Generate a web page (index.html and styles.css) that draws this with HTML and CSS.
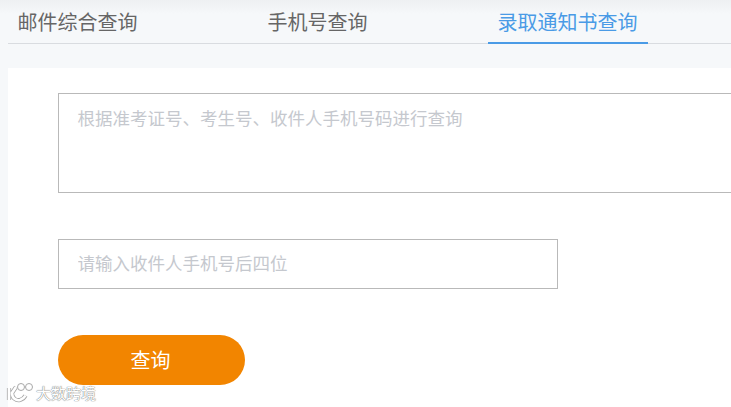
FILE: index.html
```html
<!DOCTYPE html>
<html lang="zh-CN">
<head>
    <meta charset="UTF-8">
    <meta name="viewport" content="width=device-width, initial-scale=1.0">
    <title>录取通知书查询</title>
    <link rel="stylesheet" href="styles.css">
</head>
<body>
    <div class="tabs">
        <a class="tab">邮件综合查询</a>
        <a class="tab">手机号查询</a>
        <a class="tab active">录取通知书查询</a>
    </div>
    <div class="panel">
        <textarea class="field field-area" placeholder="根据准考证号、考生号、收件人手机号码进行查询"></textarea>
        <input class="field field-phone" type="text" placeholder="请输入收件人手机号后四位">
        <button class="btn" type="button">查询</button>
    </div>
    <div class="watermark">
        <svg class="watermark-logo" width="28" height="22" viewBox="0 0 28 22" fill="none">
            <path d="M3 6v12M10 5 6 11c0 5 4 8 8 7 3-1 4.500-2.500 5.500-4.500" stroke="#a8a8a8" stroke-width="4.200"/>
            <path d="M3 6v12M10 5 6 11c0 5 4 8 8 7 3-1 4.500-2.500 5.500-4.500" stroke="#fff" stroke-width="2.600"/>
            <circle cx="15" cy="5" r="3.500" stroke="#a8a8a8" fill="#fff"/>
            <circle cx="23" cy="5" r="3.500" stroke="#a8a8a8" fill="#fff"/>
        </svg>
        <span class="watermark-text">大数跨境</span>
    </div>
</body>
</html>
```

FILE: styles.css
```css
html, body {
    height: 100%;
    overflow: hidden;
}
body {
    font-family: "Noto Sans CJK SC", "Noto Sans", sans-serif;
    background: linear-gradient(#eef0f2, #f6f8fa 14px);
    margin: 0;
    padding: 0 0 0 8px;
    position: relative;
}
.tabs {
    display: flex;
    gap: 110px;
    height: 44px;
    box-sizing: border-box;
    border-bottom: 1px solid #d9dce0;
}
.tab {
    height: 44px;
    box-sizing: border-box;
    padding: 0 10.5px 0 9.5px;
    font-size: 20px;
    line-height: 44px;
    color: #666;
    white-space: nowrap;
}
.tab.active {
    color: #4a9be6;
    border-bottom: 2px solid #4a9be6;
}
.panel {
    display: flex;
    flex-direction: column;
    align-items: flex-start;
    margin-top: 24px;
    height: 339px;
    box-sizing: border-box;
    padding: 25px 0 0 50px;
    background: #fff;
    overflow: hidden;
}
.field {
    display: block;
    box-sizing: border-box;
    flex: none;
    margin: 0;
    padding: 0 19px 0 18.5px;
    border: 1px solid #b9b9b9;
    border-radius: 0;
    outline: none;
    resize: none;
    background: #fff;
    font-family: inherit;
    font-size: 17.5px;
    color: #666;
}
.field::placeholder {
    color: #c5c8ce;
    opacity: 1;
}
.field-area {
    width: 800px;
    height: 100px;
    padding-top: 10px;
    line-height: 28px;
}
.field-phone {
    width: 500px;
    height: 50px;
    margin-top: 46px;
    padding-bottom: 3px;
}
.btn {
    flex: none;
    width: 187px;
    height: 50px;
    margin-top: 46px;
    padding: 0 2px 2px 0;
    border: 0;
    border-radius: 25px;
    background: #f28500;
    color: #fff;
    font-family: inherit;
    font-size: 20px;
}
/* sits over the page corner */
.watermark {
    position: absolute;
    left: 6px;
    top: 382px;
    display: flex;
    align-items: center;
    gap: 2px;
    height: 22px;
}
.watermark-text {
    font-size: 15px;
    line-height: 22px;
    color: #fff;
    text-shadow: 0 0 1px #777, 0 0 1px #777;
}
```
